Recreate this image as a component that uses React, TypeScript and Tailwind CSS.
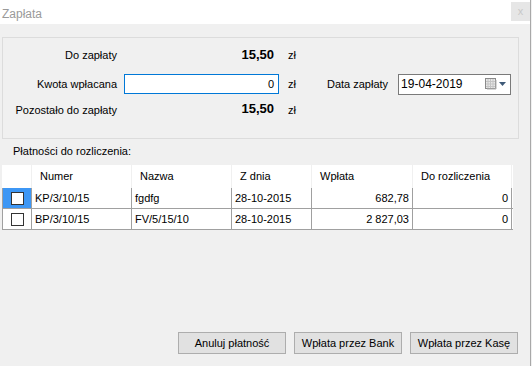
import React from "react";

const font = { fontFamily: '"Liberation Sans", Arial, sans-serif' };

const CalendarIcon = () => (
  <svg width="22" height="12" viewBox="0 0 22 12">
    <rect x="0.5" y="0.5" width="10" height="10" fill="#e8e8e8" stroke="#8a8a8a" />
    <path d="M3 1v9M5.5 1v9M8 1v9M1 3.5h9M1 6h9M1 8.5h9" stroke="#c4c4c4" strokeWidth="1" />
    <path d="M11 2v9H2" stroke="#b0b0b0" fill="none" />
    <path d="M14 4h7l-3.5 4z" fill="#3f5a78" />
  </svg>
);

const Checkbox = () => (
  <div className="w-[13px] h-[13px] border border-[#333] bg-white" />
);

const cols = [
  { name: "Numer", w: "w-[100px]" },
  { name: "Nazwa", w: "w-[100px]" },
  { name: "Z dnia", w: "w-[80px]" },
  { name: "Wpłata", w: "w-[101px]" },
  { name: "Do rozliczenia", w: "w-[99px]" },
];

const rows = [
  { sel: true, numer: "KP/3/10/15", nazwa: "fgdfg", zdnia: "28-10-2015", wplata: "682,78", roz: "0" },
  { sel: false, numer: "BP/3/10/15", nazwa: "FV/5/15/10", zdnia: "28-10-2015", wplata: "2 827,03", roz: "0" },
];

export default function App() {
  return (
    <div className="w-[532px] h-[366px] flex bg-[#f0f0f0] text-[11px] text-black overflow-hidden" style={font}>
      <div className="w-[530px] flex flex-col">
        {/* title bar */}
        <div className="h-[24px] bg-white flex items-start justify-between">
          <span className="ml-[2px] mt-[5px] text-[12px] text-[#9a9a9a]">Zapłata</span>
          <div className="mt-[2px] w-[19px] h-[19px] bg-[#e6e6e6] flex items-center justify-center text-[11px] text-[#c8c8c8]">x</div>
        </div>

        {/* summary group */}
        <div className="ml-[2px] mt-[13px] w-[517px] h-[102px] border border-[#dcdcdc] flex flex-col">
          <div className="mt-[7px] h-[20px] flex items-center">
            <div className="w-[114px] text-right">Do zapłaty</div>
            <div className="w-[154px] ml-[7px] pr-[4px] text-right font-bold text-[13px]">15,50</div>
            <div className="ml-[10px]">zł</div>
          </div>
          <div className="mt-[9px] h-[20px] flex items-center">
            <div className="w-[114px] text-right">Kwota wpłacana</div>
            <div className="w-[155px] h-[20px] ml-[7px] border border-[#0078d7] bg-white flex items-center justify-end pr-[4px]">0</div>
            <div className="ml-[9px]">zł</div>
            <div className="ml-[31px]">Data zapłaty</div>
            <div className="ml-[10px] w-[113px] h-[21px] border border-[#7a7a7a] bg-white flex items-center justify-between pl-[2px] pr-[3px] text-[12px]">
              <span>19-04-2019</span>
              <CalendarIcon />
            </div>
          </div>
          <div className="mt-[5px] h-[20px] flex items-center">
            <div className="w-[114px] text-right mt-[2px]">Pozostało do zapłaty</div>
            <div className="w-[154px] ml-[7px] pr-[4px] text-right font-bold text-[13px]">15,50</div>
            <div className="ml-[10px] mt-[2px]">zł</div>
          </div>
        </div>

        <div className="ml-[13px] mt-[5px] h-[14px] leading-[14px]">Płatności do rozliczenia:</div>

        {/* grid */}
        <div className="ml-[2px] mt-[7px] w-[511px] flex flex-col">
          <div className="h-[23px] flex bg-white">
            <div className="w-[30px] border-r border-[#f0f0f0]" />
            {cols.map((c) => (
              <div key={c.name} className={`${c.w} pl-[8px] flex items-center border-r border-[#f0f0f0]`}>{c.name}</div>
            ))}
          </div>
          {rows.map((r) => (
            <div key={r.numer} className="h-[21px] flex border-b border-l border-[#a0a0a0] bg-white">
              <div className={`w-[29px] border-r border-[#a0a0a0] flex items-center justify-center ${r.sel ? "bg-[#3d97f5]" : "bg-white"}`}>
                <Checkbox />
              </div>
              <div className="w-[100px] border-r border-[#a0a0a0] pl-[3px] flex items-center">{r.numer}</div>
              <div className="w-[100px] border-r border-[#a0a0a0] pl-[3px] flex items-center">{r.nazwa}</div>
              <div className="w-[80px] border-r border-[#a0a0a0] pl-[3px] flex items-center">{r.zdnia}</div>
              <div className="w-[101px] border-r border-[#a0a0a0] pr-[3px] flex items-center justify-end">{r.wplata}</div>
              <div className="w-[99px] border-r border-[#a0a0a0] pr-[3px] flex items-center justify-end">{r.roz}</div>
            </div>
          ))}
        </div>

        <div className="flex-1" />

        {/* buttons */}
        <div className="mb-[12px] mr-[12px] flex justify-end gap-[8px]">
          {["Anuluj płatność", "Wpłata przez Bank", "Wpłata przez Kasę"].map((b) => (
            <button key={b} className="w-[108px] h-[22px] bg-[#e1e1e1] border border-[#adadad] text-[11px]">{b}</button>
          ))}
        </div>
      </div>
      <div className="w-[2px] border-l border-[#a8a8a8] bg-[#f0f0f0]" />
    </div>
  );
}
